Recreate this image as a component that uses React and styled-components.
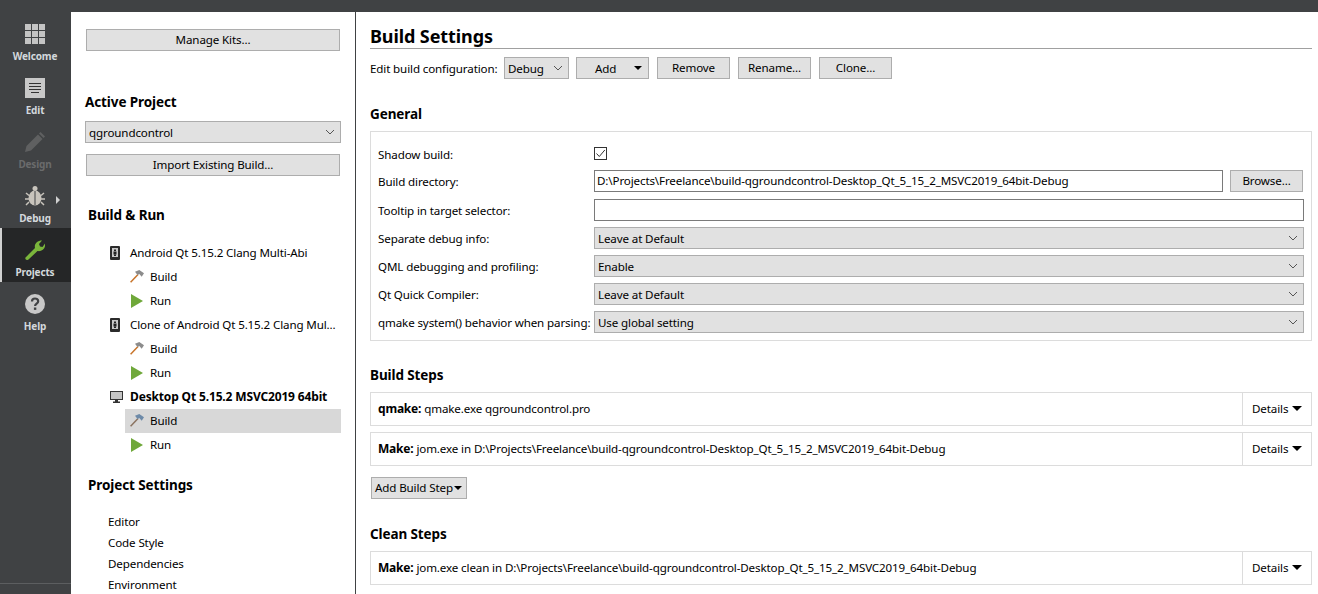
import React from "react";
import styled, { createGlobalStyle } from "styled-components";

const FONT = `"Noto Sans", "Open Sans", "Liberation Sans", sans-serif`;
const BUILD_DIR = "D:\\Projects\\Freelance\\build-qgroundcontrol-Desktop_Qt_5_15_2_MSVC2019_64bit-Debug";

const Global = createGlobalStyle`
  html, body { margin: 0; padding: 0; background: #fff; overflow: hidden; }
  * { box-sizing: border-box; }
  body { font-family: ${FONT}; font-size: 11.6px; color: #000; letter-spacing: -0.13px; }
`;

const Window = styled.div`
  width: 1318px;
  height: 594px;
  display: flex;
  flex-direction: column;
  overflow: hidden;
`;
const TopBar = styled.div`
  height: 12px;
  flex: none;
  background: #404244;
`;
const Body = styled.div`
  flex: 1;
  display: flex;
  min-height: 0;
`;

/* mode bar */
const ModeBar = styled.nav`
  width: 71px;
  flex: none;
  background: #404244;
  display: flex;
  flex-direction: column;
`;
const Mode = styled.div`
  height: 54px;
  display: flex;
  flex-direction: column;
  align-items: center;
  padding: 12px 1px 0 0;
  position: relative;
  font-size: 10px;
  line-height: 14px;
  font-weight: 700;
  letter-spacing: -0.15px;
  color: ${p => (p.$disabled ? "#6a6b6c" : "#d3d8dc")};
  background: ${p => (p.$active ? "#252627" : "transparent")};
  box-shadow: ${p => (p.$active ? "inset 2px 0 0 #d0d0d0" : "none")};
  svg { margin-bottom: 5px; flex: none; }
`;
const ModeArrow = styled.span`
  position: absolute;
  left: 56px;
  top: 22px;
  width: 0;
  height: 0;
  border-left: 4px solid #d0d0d0;
  border-top: 4px solid transparent;
  border-bottom: 4px solid transparent;
`;
const Spacer = styled.div`
  flex: 1;
`;
const ModeFooter = styled.div`
  height: 11px;
  flex: none;
  border-top: 1px solid #5c5e60;
`;

/* project panel */
const Panel = styled.aside`
  width: 285px;
  flex: none;
  background: #fff;
  border-right: 1px solid #404244;
  padding: 17px 14px 0 14px;
  overflow: hidden;
`;
const Button = styled.div`
  height: 22px;
  display: flex;
  align-items: center;
  justify-content: ${p => (p.$between ? "space-between" : "center")};
  background: #e1e1e1;
  border: 1px solid #adadad;
  flex: none;
  width: ${p => (p.$w ? `${p.$w}px` : "auto")};
  padding: ${p => (p.$between ? "0 6px 0 18px" : "0 0 1px 0")};
  margin: ${p => p.$m || "0"};
  white-space: nowrap;
`;
const PanelHeading = styled.h3`
  margin: ${p => p.$m};
  padding-left: ${p => p.$indent || 0}px;
  font-size: 13.5px;
  line-height: 18px;
  font-weight: 700;
  letter-spacing: -0.1px;
`;
const Combo = styled.div`
  height: 22px;
  display: flex;
  align-items: center;
  justify-content: space-between;
  background: #e1e1e1;
  border: 1px solid #adadad;
  padding: 0 3px;
  white-space: nowrap;
  flex: ${p => (p.$w ? "none" : "1")};
  width: ${p => (p.$w ? `${p.$w}px` : "auto")};
  margin: ${p => p.$m || "0"};
`;
const Tree = styled.div`
  margin: 17px 0 0 0;
`;
const TreeRow = styled.div`
  height: 24px;
  display: flex;
  align-items: center;
  margin-left: ${p => (p.$child ? "40px" : "25px")};
  width: ${p => (p.$child ? "216px" : "auto")};
  padding-left: ${p => (p.$child ? "5px" : "0")};
  padding-bottom: 1px;
  background: ${p => (p.$selected ? "#d8d8d8" : "transparent")};
  font-weight: ${p => (p.$bold ? 700 : 400)};
  font-size: ${p => (p.$bold ? "12px" : "inherit")};
  letter-spacing: ${p => (p.$bold ? "-0.15px" : "inherit")};
  white-space: nowrap;
`;
const TreeIcon = styled.span`
  width: 20px;
  flex: none;
  display: flex;
  align-items: center;
  justify-content: flex-start;
`;
const SettingsList = styled.div`
  margin: 17px 0 0 23px;
`;
const SettingsItem = styled.div`
  height: 21px;
  line-height: 21px;
`;

/* main settings */
const Main = styled.main`
  flex: 1;
  min-width: 0;
  background: #fff;
  padding: 11px 6px 0 14px;
  overflow: hidden;
`;
const Title = styled.h1`
  margin: 0;
  height: 26px;
  font-size: 18px;
  line-height: 26px;
  font-weight: 700;
  letter-spacing: -0.1px;
  border-bottom: 1px solid #a0a0a0;
`;
const ConfigRow = styled.div`
  display: flex;
  align-items: center;
  margin-top: 8px;
  height: 22px;
`;
const ConfigLabel = styled.span`
  width: 134px;
  flex: none;
  white-space: nowrap;
`;
const SectionTitle = styled.h2`
  margin: ${p => p.$m};
  font-size: 13.5px;
  line-height: 18px;
  font-weight: 700;
  letter-spacing: -0.1px;
`;
const FormBox = styled.div`
  margin-top: 8px;
  height: 210px;
  border: 1px solid #dcdcdc;
  padding: 13px 7px 0 7px;
  display: grid;
  grid-template-columns: 216px 1fr;
  grid-template-rows: 19px 22px 23px repeat(4, 22px);
  row-gap: 6px;
  align-items: end;
`;
const FormLabel = styled.div`
  white-space: nowrap;
  height: 21px;
  line-height: 21px;
`;
const ShadowLabel = styled(FormLabel)`
  height: 19px;
  line-height: 20px;
`;
const Field = styled.div`
  display: flex;
  align-items: center;
  gap: 7px;
  min-width: 0;
`;
const TextInput = styled.div`
  flex: 1;
  height: 22px;
  border: 1px solid #7a7a7a;
  background: #fff;
  padding: 0 2px;
  line-height: 20px;
  white-space: nowrap;
  overflow: hidden;
`;
const CheckBox = styled.span`
  width: 13px;
  height: 13px;
  margin-bottom: 4px;
  border: 1px solid #333;
  display: flex;
  align-items: center;
  justify-content: center;
`;
const Step = styled.div`
  height: 34px;
  margin-top: ${p => p.$mt}px;
  display: flex;
  align-items: stretch;
  border: 1px solid #dcdcdc;
`;
const StepText = styled.div`
  flex: 1;
  display: flex;
  align-items: center;
  padding: 0 0 1px 7px;
  white-space: pre;
  b { font-weight: 700; font-size: 12px; letter-spacing: -0.2px; }
`;
const Details = styled.div`
  width: 69px;
  flex: none;
  border-left: 1px solid #dcdcdc;
  display: flex;
  align-items: center;
  justify-content: space-between;
  padding: 0 9px 1px 9px;
`;
const Caret = styled.span`
  width: 0;
  height: 0;
  border-top: 5px solid #000;
  border-left: 5px solid transparent;
  border-right: 5px solid transparent;
`;
const SmallCaret = styled(Caret)`
  border-top-width: 4px;
  border-left-width: 4px;
  border-right-width: 4px;
`;
const AddStep = styled.div`
  width: 96px;
  height: 22px;
  margin: 11px 0 0 1px;
  display: flex;
  align-items: center;
  gap: 1px;
  padding: 0 0 1px 3px;
  background: #e1e1e1;
  border: 1px solid #adadad;
  white-space: nowrap;
`;

/* drawn icons */
const ChevronSvg = styled.svg`
  flex: none;
  margin-right: 2px;
`;
const Chevron = () => (
  <ChevronSvg width="10" height="6" viewBox="0 0 10 6">
    <path d="M1 1l4 4 4-4" fill="none" stroke="#555" strokeWidth="1" />
  </ChevronSvg>
);

const GridIcon = () => (
  <svg width="20" height="20" viewBox="0 0 20 20" fill="#c4c4c4">
    {[0, 7, 14].map(y =>
      [0, 7, 14].map(x => <rect key={`${x}-${y}`} x={x} y={y} width="6" height="6" />)
    )}
  </svg>
);
const EditIcon = () => (
  <svg width="20" height="20" viewBox="0 0 20 20">
    <rect width="20" height="20" fill="#c8c8c8" />
    <path d="M4 5.500h12M4 8.500h12M4 11.500h12M6 14.500h8" stroke="#333" strokeWidth="1" />
  </svg>
);
const PencilIcon = () => (
  <svg width="20" height="20" viewBox="0 0 20 20" fill="#5f6061">
    <path d="M0 20l1.500-6L13 2.500l4.500 4.500L6 18.500z" />
    <path d="M14 1.500L15.500 0 20 4.500 18.500 6z" />
  </svg>
);
const BugIcon = () => (
  <svg width="20" height="20" viewBox="0 0 20 20">
    <ellipse cx="10" cy="12" rx="6.500" ry="7.500" fill="#c8c4bc" />
    <circle cx="10" cy="2.500" r="2.500" fill="#c8c4bc" />
    <path d="M10 5v14" stroke="#404244" strokeWidth="1" fill="none" />
    <path d="M1 7l3 2.500M0 13h4M1 19l3-3M19 7l-3 2.500M20 13h-4M19 19l-3-3" stroke="#c8c4bc" strokeWidth="1.500" fill="none" />
  </svg>
);
const WrenchIcon = () => (
  <svg width="20" height="20" viewBox="0 0 20 20">
    <path d="M.5 17.500L10 8C9 4 12 .5 17 .5L14 4l1 2.500 2.500.5L20 3.500C21 8 17 12 12.500 11L3.500 19.500C2 21-.5 19 .5 17.500z" fill="#7ab53b" />
  </svg>
);
const HelpIcon = () => (
  <svg width="20" height="20" viewBox="0 0 20 20">
    <circle cx="10" cy="10" r="10" fill="#c8c8c8" />
    <path d="M7 7.500C7 5.500 8.500 4.500 10 4.500s3.200 1 3.200 2.800c0 2.300-3.100 2.400-3.100 4.700" fill="none" stroke="#404244" strokeWidth="2.200" />
    <rect x="8.900" y="13.500" width="2.400" height="2.400" fill="#404244" />
  </svg>
);
const HammerIcon = ({ selected }) => (
  <svg width="14" height="13" viewBox="0 0 14 13">
    <path d="M.6 12.200L8 4.500" stroke={selected ? "#8b7360" : "#c8742a"} strokeWidth="1.500" fill="none" />
    <path d="M5 1.700L9.300 0 14 3.300 11.700 6.700 9.300 4 7.500 5z" fill={selected ? "#6d8aa8" : "#8c8c8c"} />
  </svg>
);
const RunIcon = () => (
  <svg width="13" height="14" viewBox="-1 0 13 14">
    <path d="M0 0l12 7-12 7z" fill="#6fa83a" />
  </svg>
);
const PhoneIcon = () => (
  <svg width="10" height="14" viewBox="0 0 10 14">
    <rect width="10" height="14" rx="1" fill="#2b2b2b" />
    <rect x="2" y="2" width="6" height="9" fill="#c8c8c8" />
    <rect x="4" y="3.500" width="2" height="1.500" fill="#222" />
    <rect x="3.500" y="5.500" width="3" height="3" fill="#222" />
    <rect x="4" y="8.500" width="2" height="1.500" fill="#222" />
  </svg>
);
const MonitorIcon = () => (
  <svg width="13" height="12" viewBox="0 0 13 12">
    <rect x=".5" y=".5" width="12" height="8" fill="#c4c4c4" stroke="#333" />
    <path d="M5 9h3v1.500h2V12H3v-1.500h2z" fill="#333" />
  </svg>
);
const Check = () => (
  <svg width="11" height="11" viewBox="0 0 11 11">
    <path d="M1.500 5.500l2.800 3L9.800 2" fill="none" stroke="#333" strokeWidth="1" />
  </svg>
);

const KITS = [
  { name: "Android Qt 5.15.2 Clang Multi-Abi", icon: <PhoneIcon /> },
  { name: "Clone of Android Qt 5.15.2 Clang Mul...", icon: <PhoneIcon /> },
  { name: "Desktop Qt 5.15.2 MSVC2019 64bit", icon: <MonitorIcon />, bold: true, selected: true },
];

const COMBOS = [
  ["Separate debug info:", "Leave at Default"],
  ["QML debugging and profiling:", "Enable"],
  ["Qt Quick Compiler:", "Leave at Default"],
  ["qmake system() behavior when parsing:", "Use global setting"],
];

const Detail = () => (
  <Details>
    Details
    <Caret />
  </Details>
);

export default function App() {
  return (
    <Window>
      <Global />
      <TopBar />
      <Body>
        <ModeBar>
          <Mode><GridIcon />Welcome</Mode>
          <Mode><EditIcon />Edit</Mode>
          <Mode $disabled><PencilIcon />Design</Mode>
          <Mode><BugIcon />Debug<ModeArrow /></Mode>
          <Mode $active><WrenchIcon />Projects</Mode>
          <Mode><HelpIcon />Help</Mode>
          <Spacer />
          <ModeFooter />
        </ModeBar>

        <Panel>
          <Button $m="0 1px">Manage Kits...</Button>
          <PanelHeading $m="42px 0 0 0">Active Project</PanelHeading>
          <Combo $m="10px 0 0 0">
            qgroundcontrol
            <Chevron />
          </Combo>
          <Button $m="11px 1px 0">Import Existing Build...</Button>
          <PanelHeading $m="30px 0 0 0" $indent={3}>Build &amp; Run</PanelHeading>
          <Tree>
            {KITS.map(kit => (
              <React.Fragment key={kit.name}>
                <TreeRow $bold={kit.bold}>
                  <TreeIcon>{kit.icon}</TreeIcon>
                  {kit.name}
                </TreeRow>
                <TreeRow $child $selected={kit.selected}>
                  <TreeIcon><HammerIcon selected={kit.selected} /></TreeIcon>
                  Build
                </TreeRow>
                <TreeRow $child>
                  <TreeIcon><RunIcon /></TreeIcon>
                  Run
                </TreeRow>
              </React.Fragment>
            ))}
          </Tree>
          <PanelHeading $m="19px 0 0 0" $indent={3}>Project Settings</PanelHeading>
          <SettingsList>
            <SettingsItem>Editor</SettingsItem>
            <SettingsItem>Code Style</SettingsItem>
            <SettingsItem>Dependencies</SettingsItem>
            <SettingsItem>Environment</SettingsItem>
          </SettingsList>
        </Panel>

        <Main>
          <Title>Build Settings</Title>
          <ConfigRow>
            <ConfigLabel>Edit build configuration:</ConfigLabel>
            <Combo $w={65}>
              Debug
              <Chevron />
            </Combo>
            <Button $w={73} $between $m="0 0 0 7px">Add<SmallCaret /></Button>
            <Button $w={73} $m="0 0 0 8px">Remove</Button>
            <Button $w={73} $m="0 0 0 8px">Rename...</Button>
            <Button $w={73} $m="0 0 0 8px">Clone...</Button>
          </ConfigRow>

          <SectionTitle $m="26px 0 0 0">General</SectionTitle>
          <FormBox>
            <ShadowLabel>Shadow build:</ShadowLabel>
            <Field><CheckBox><Check /></CheckBox></Field>
            <FormLabel>Build directory:</FormLabel>
            <Field>
              <TextInput>{BUILD_DIR}</TextInput>
              <Button $w={73} $m="0 1px 0 0">Browse...</Button>
            </Field>
            <FormLabel>Tooltip in target selector:</FormLabel>
            <Field><TextInput /></Field>
            {COMBOS.map(([label, value]) => (
              <React.Fragment key={label}>
                <FormLabel>{label}</FormLabel>
                <Field>
                  <Combo>
                    {value}
                    <Chevron />
                  </Combo>
                </Field>
              </React.Fragment>
            ))}
          </FormBox>

          <SectionTitle $m="25px 0 0 0">Build Steps</SectionTitle>
          <Step $mt={8}>
            <StepText><b>qmake: </b>qmake.exe qgroundcontrol.pro</StepText>
            <Detail />
          </Step>
          <Step $mt={6}>
            <StepText><b>Make: </b>jom.exe in {BUILD_DIR}</StepText>
            <Detail />
          </Step>
          <AddStep>Add Build Step<SmallCaret /></AddStep>

          <SectionTitle $m="26px 0 0 0">Clean Steps</SectionTitle>
          <Step $mt={8}>
            <StepText><b>Make: </b>jom.exe clean in {BUILD_DIR}</StepText>
            <Detail />
          </Step>
        </Main>
      </Body>
    </Window>
  );
}
